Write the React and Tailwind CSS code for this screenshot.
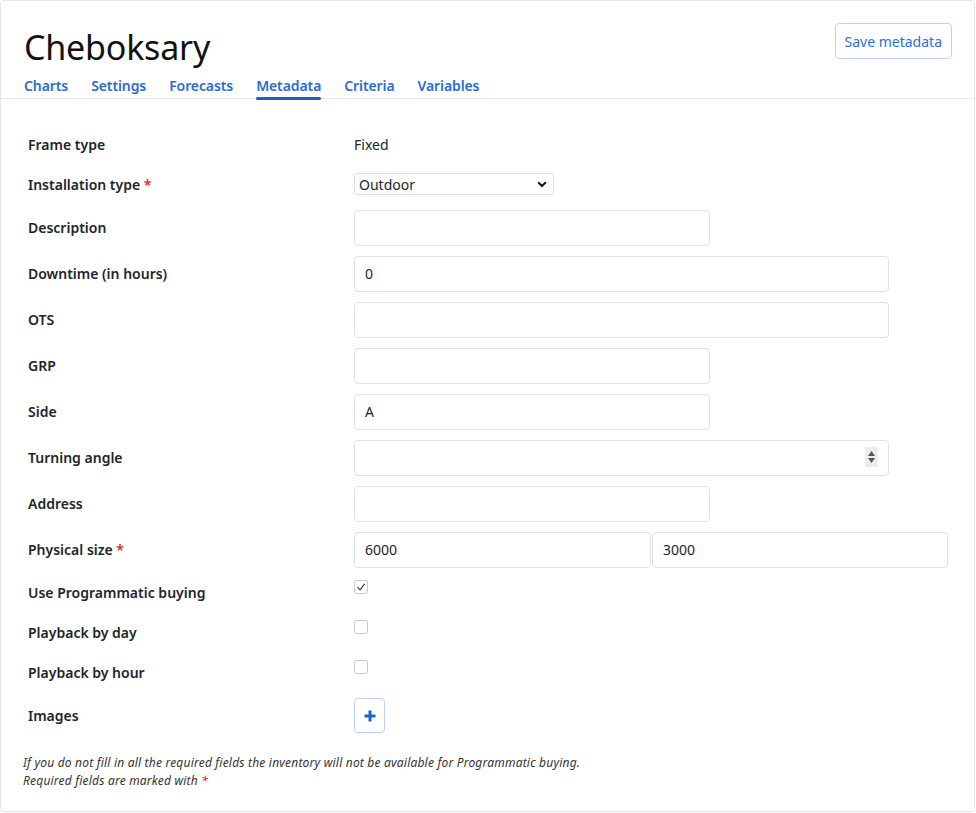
import React from "react";

const Label = ({ children, req }) => (
  <div className="w-[326px] shrink-0 text-[14px] font-semibold text-[#212529]">
    {children}
    {req && <span className="text-[#e02424]"> *</span>}
  </div>
);

const Input = ({ value = "", w }) => (
  <input
    readOnly
    value={value}
    className={`${w} h-[36px] rounded-[4px] border border-[#dee2e6] bg-white px-[10px] text-[14px] text-[#212529] outline-none`}
  />
);

const Check = ({ checked }) => (
  <span className="mt-[2px] flex h-[14px] w-[14px] items-center justify-center self-start rounded-[2px] border border-[#c8ccd1] bg-white">
    {checked && (
      <svg width="10" height="10" viewBox="0 0 10 10">
        <path d="M1.5 5.2 L4 7.8 L8.6 1.8" fill="none" stroke="#333" strokeWidth="1.1" />
      </svg>
    )}
  </span>
);

export default function App() {
  const tabs = ["Charts", "Settings", "Forecasts", "Metadata", "Criteria", "Variables"];
  return (
    <div
      className="h-[813px] w-[976px] bg-white"
      style={{ fontFamily: '"Noto Sans", "Open Sans", sans-serif' }}
    >
      <div className="flex h-[812px] w-[975px] flex-col rounded-[4px] border border-[#e3e6ea] bg-white">
        <div className="flex justify-between border-b border-[#e3e8ef] pl-[23px] pr-[22px]">
          <div className="flex flex-col">
            <h1 className="mt-[24px] h-[44px] text-[34px] leading-[44px] text-[#111] tracking-[-0.2px]">
              Cheboksary
            </h1>
            <div className="mt-[8px] flex gap-[23px]">
              {tabs.map((t) => (
                <div
                  key={t}
                  className="relative pb-[3px] text-[14px] font-semibold leading-[18px] tracking-[-0.1px] text-[#2c6ccf]"
                >
                  {t}
                  {t === "Metadata" && (
                    <span className="absolute bottom-[-2px] left-0 right-0 h-[3px] rounded-full bg-[#1b5fc8]" />
                  )}
                </div>
              ))}
            </div>
          </div>
          <button className="mt-[22px] h-[36px] rounded-[4px] border border-[#bcd2f3] px-[9px] text-[14px] text-[#2f6fd6]">
            Save metadata
          </button>
        </div>

        <div className="flex flex-col gap-[11px] pl-[27px] pt-[31px]">
          <div className="flex h-[28px] items-center">
            <Label>Frame type</Label>
            <span className="text-[14px] text-[#212529]">Fixed</span>
          </div>
          <div className="flex h-[30px] items-center">
            <Label req>Installation type</Label>
            <div className="flex h-[22px] w-[200px] items-center justify-between rounded-[3px] border border-[#dcdfe3] bg-white pl-[4px] pr-[6px] text-[14px] text-[#212529]">
              <span>Outdoor</span>
              <svg width="10" height="7" viewBox="0 0 10 7">
                <path d="M1.2 1.3 L5 5 L8.8 1.3" fill="none" stroke="#111" strokeWidth="2" />
              </svg>
            </div>
          </div>
          <div className="flex h-[35px] items-center">
            <Label>Description</Label>
            <Input w="w-[356px]" />
          </div>
          <div className="flex h-[35px] items-center">
            <Label>Downtime (in hours)</Label>
            <Input w="w-[535px]" value="0" />
          </div>
          <div className="flex h-[35px] items-center">
            <Label>OTS</Label>
            <Input w="w-[535px]" />
          </div>
          <div className="flex h-[35px] items-center">
            <Label>GRP</Label>
            <Input w="w-[356px]" />
          </div>
          <div className="flex h-[35px] items-center">
            <Label>Side</Label>
            <Input w="w-[356px]" value="A" />
          </div>
          <div className="flex h-[35px] items-center">
            <Label>Turning angle</Label>
            <div className="relative">
              <Input w="w-[535px]" />
              <div className="absolute right-[11px] top-[7px] flex h-[20px] w-[13px] flex-col items-center justify-center gap-[2px] bg-[#ececec]">
                <svg width="7" height="5" viewBox="0 0 7 5">
                  <path d="M0 5 L3.5 0 L7 5 Z" fill="#555" />
                </svg>
                <svg width="7" height="5" viewBox="0 0 7 5">
                  <path d="M0 0 L3.5 5 L7 0 Z" fill="#555" />
                </svg>
              </div>
            </div>
          </div>
          <div className="flex h-[35px] items-center">
            <Label>Address</Label>
            <Input w="w-[356px]" />
          </div>
          <div className="flex h-[35px] items-center">
            <Label req>Physical size</Label>
            <div className="flex gap-[1px]">
              <Input w="w-[297px]" value="6000" />
              <Input w="w-[296px]" value="3000" />
            </div>
          </div>
          <div className="flex h-[29px] items-center">
            <Label>Use Programmatic buying</Label>
            <Check checked />
          </div>
          <div className="flex h-[29px] items-center">
            <Label>Playback by day</Label>
            <Check />
          </div>
          <div className="flex h-[29px] items-center">
            <Label>Playback by hour</Label>
            <Check />
          </div>
          <div className="flex h-[35px] items-center">
            <Label>Images</Label>
            <button className="flex h-[35px] w-[31px] items-center justify-center rounded-[4px] border border-[#bcd2f3] bg-white">
              <svg width="12" height="12" viewBox="0 0 12 12">
                <path d="M6 0.5 V11.5 M0.5 6 H11.5" stroke="#1b62d0" strokeWidth="3" />
              </svg>
            </button>
          </div>
        </div>

        <div className="mt-[21px] pl-[22px] text-[12px] italic leading-[18px] tracking-[0.2px] text-[#333]">
          <div>
            If you do not fill in all the required fields the inventory will not be available for Programmatic buying.
          </div>
          <div>
            Required fields are marked with <span className="text-[#e02424]">*</span>
          </div>
        </div>
      </div>
    </div>
  );
}
